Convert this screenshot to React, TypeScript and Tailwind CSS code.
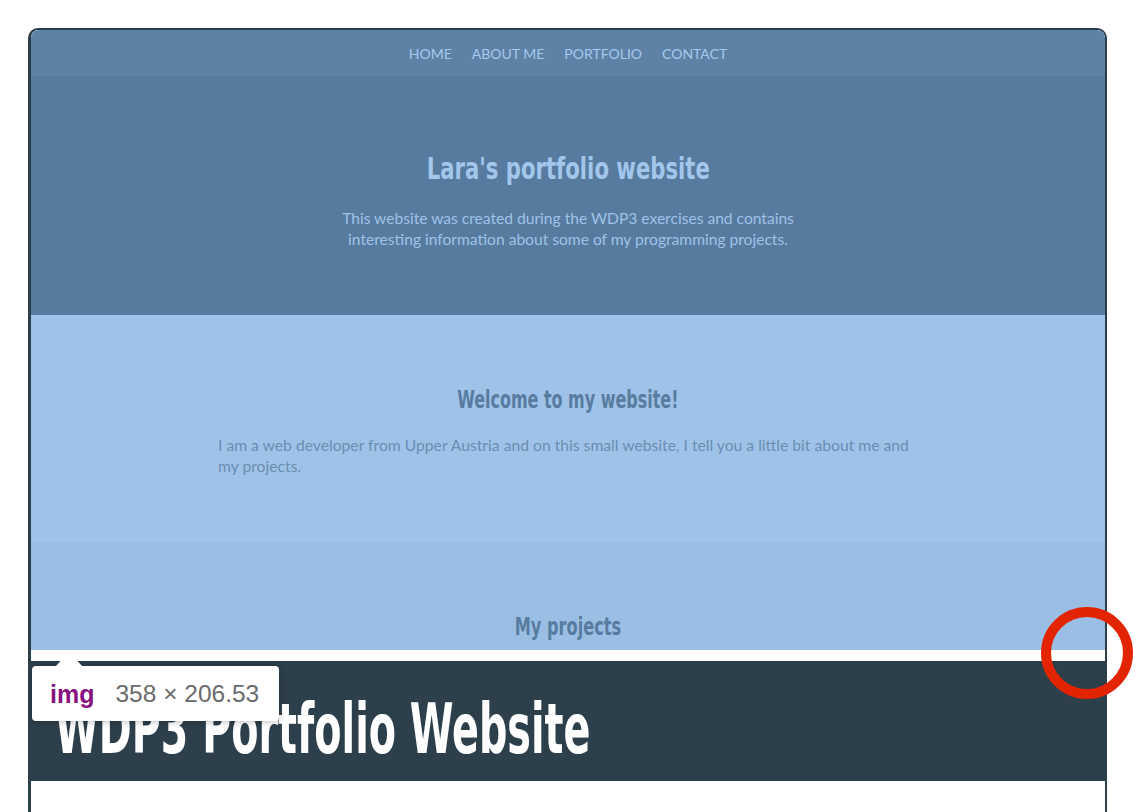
import React from 'react';

const navItems = ['HOME', 'ABOUT ME', 'PORTFOLIO', 'CONTACT'];

const headFont = "font-['Liberation_Sans_Narrow','DejaVu_Sans_Condensed',sans-serif]";
const bodyFont = "font-['Lato','Liberation_Sans',sans-serif]";

const SiteShot: React.FC = () => {
  return (
    <div className="rounded-t-[8px] overflow-hidden">
      <nav className="h-[46px] bg-[#5e82a6] flex items-center justify-center gap-[20px]">
        {navItems.map(item => (
          <span key={item} className={`${bodyFont} text-[14px] text-[#a5c8ed]`}>
            {item}
          </span>
        ))}
      </nav>
      <header className="h-[239px] bg-[#567b9f] flex flex-col items-center pt-[74px]">
        <h1 className={`${headFont} font-bold text-[31px] leading-[36px] text-[#a3c6eb] scale-x-[0.76] whitespace-nowrap`}>
          Lara's portfolio website
        </h1>
        <p className={`${bodyFont} mt-[22px] w-[464px] text-center text-[15.6px] leading-[21px] text-[#9fc2e6]`}>
          This website was created during the WDP3 exercises and contains interesting information about some of my programming projects.
        </p>
      </header>
      <section className="h-[227px] bg-[#9fc3e8] flex flex-col items-center pt-[70px]">
        <h2 className={`${headFont} font-bold text-[25px] leading-[30px] text-[#587c9f] scale-x-[0.71] whitespace-nowrap`}>
          Welcome to my website!
        </h2>
        <p className={`${bodyFont} mt-[20px] w-[700px] text-[15.7px] leading-[21px] text-[#6a8eb1]`}>
          I am a web developer from Upper Austria and on this small website, I tell you a little bit about me and my projects.
        </p>
      </section>
      <section className="h-[108px] bg-[#9bbfe4] flex flex-col items-center pt-[70px]">
        <h2 className={`${headFont} font-bold text-[25px] leading-[30px] text-[#587c9f] scale-x-[0.72] whitespace-nowrap`}>
          My projects
        </h2>
      </section>
    </div>
  );
};

const Tooltip: React.FC = () => {
  return (
    <div className="absolute left-[32px] top-[666px] w-[247px] h-[55px] bg-white rounded-[4px] shadow-[0_1px_6px_rgba(0,0,0,0.25)] flex items-center pl-[18px] gap-[21px]">
      <svg className="absolute left-[23px] top-[-14px]" width="28" height="15" viewBox="0 0 28 15">
        <polygon points="0,15 14,0 28,15" fill="#ffffff" />
      </svg>
      <span className="font-['Liberation_Sans',Arial,sans-serif] font-bold text-[25px] leading-[30px] text-[#881280]">img</span>
      <span className="font-['Liberation_Sans',Arial,sans-serif] text-[24.5px] leading-[30px] text-[#6b6b6b]">358 × 206.53</span>
    </div>
  );
};

export default function App() {
  return (
    <div className="relative w-[1146px] h-[812px] overflow-hidden bg-white">
      <div className="ml-[28px] mt-[28px] w-[1079px] h-[800px] bg-white border-t-2 border-l-[3px] border-r-[2px] border-[#2c3e4a] rounded-t-[10px]">
        <SiteShot />
        <div className="h-[11px] bg-white" />
        <div className="h-[120px] bg-[#2d3f4b] -ml-[3px] -mr-[1px] pl-[27px] pt-[32px] overflow-hidden">
          <h1 className={`${headFont} font-bold text-[70px] leading-[72px] text-white scale-x-[0.63] origin-left whitespace-nowrap`}>
            WDP3 Portfolio Website
          </h1>
        </div>
      </div>
      <Tooltip />
      <div className="absolute left-[1041px] top-[607px] w-[92px] h-[92px] rounded-full border-[10px] border-[#e32400]" />
    </div>
  );
}
